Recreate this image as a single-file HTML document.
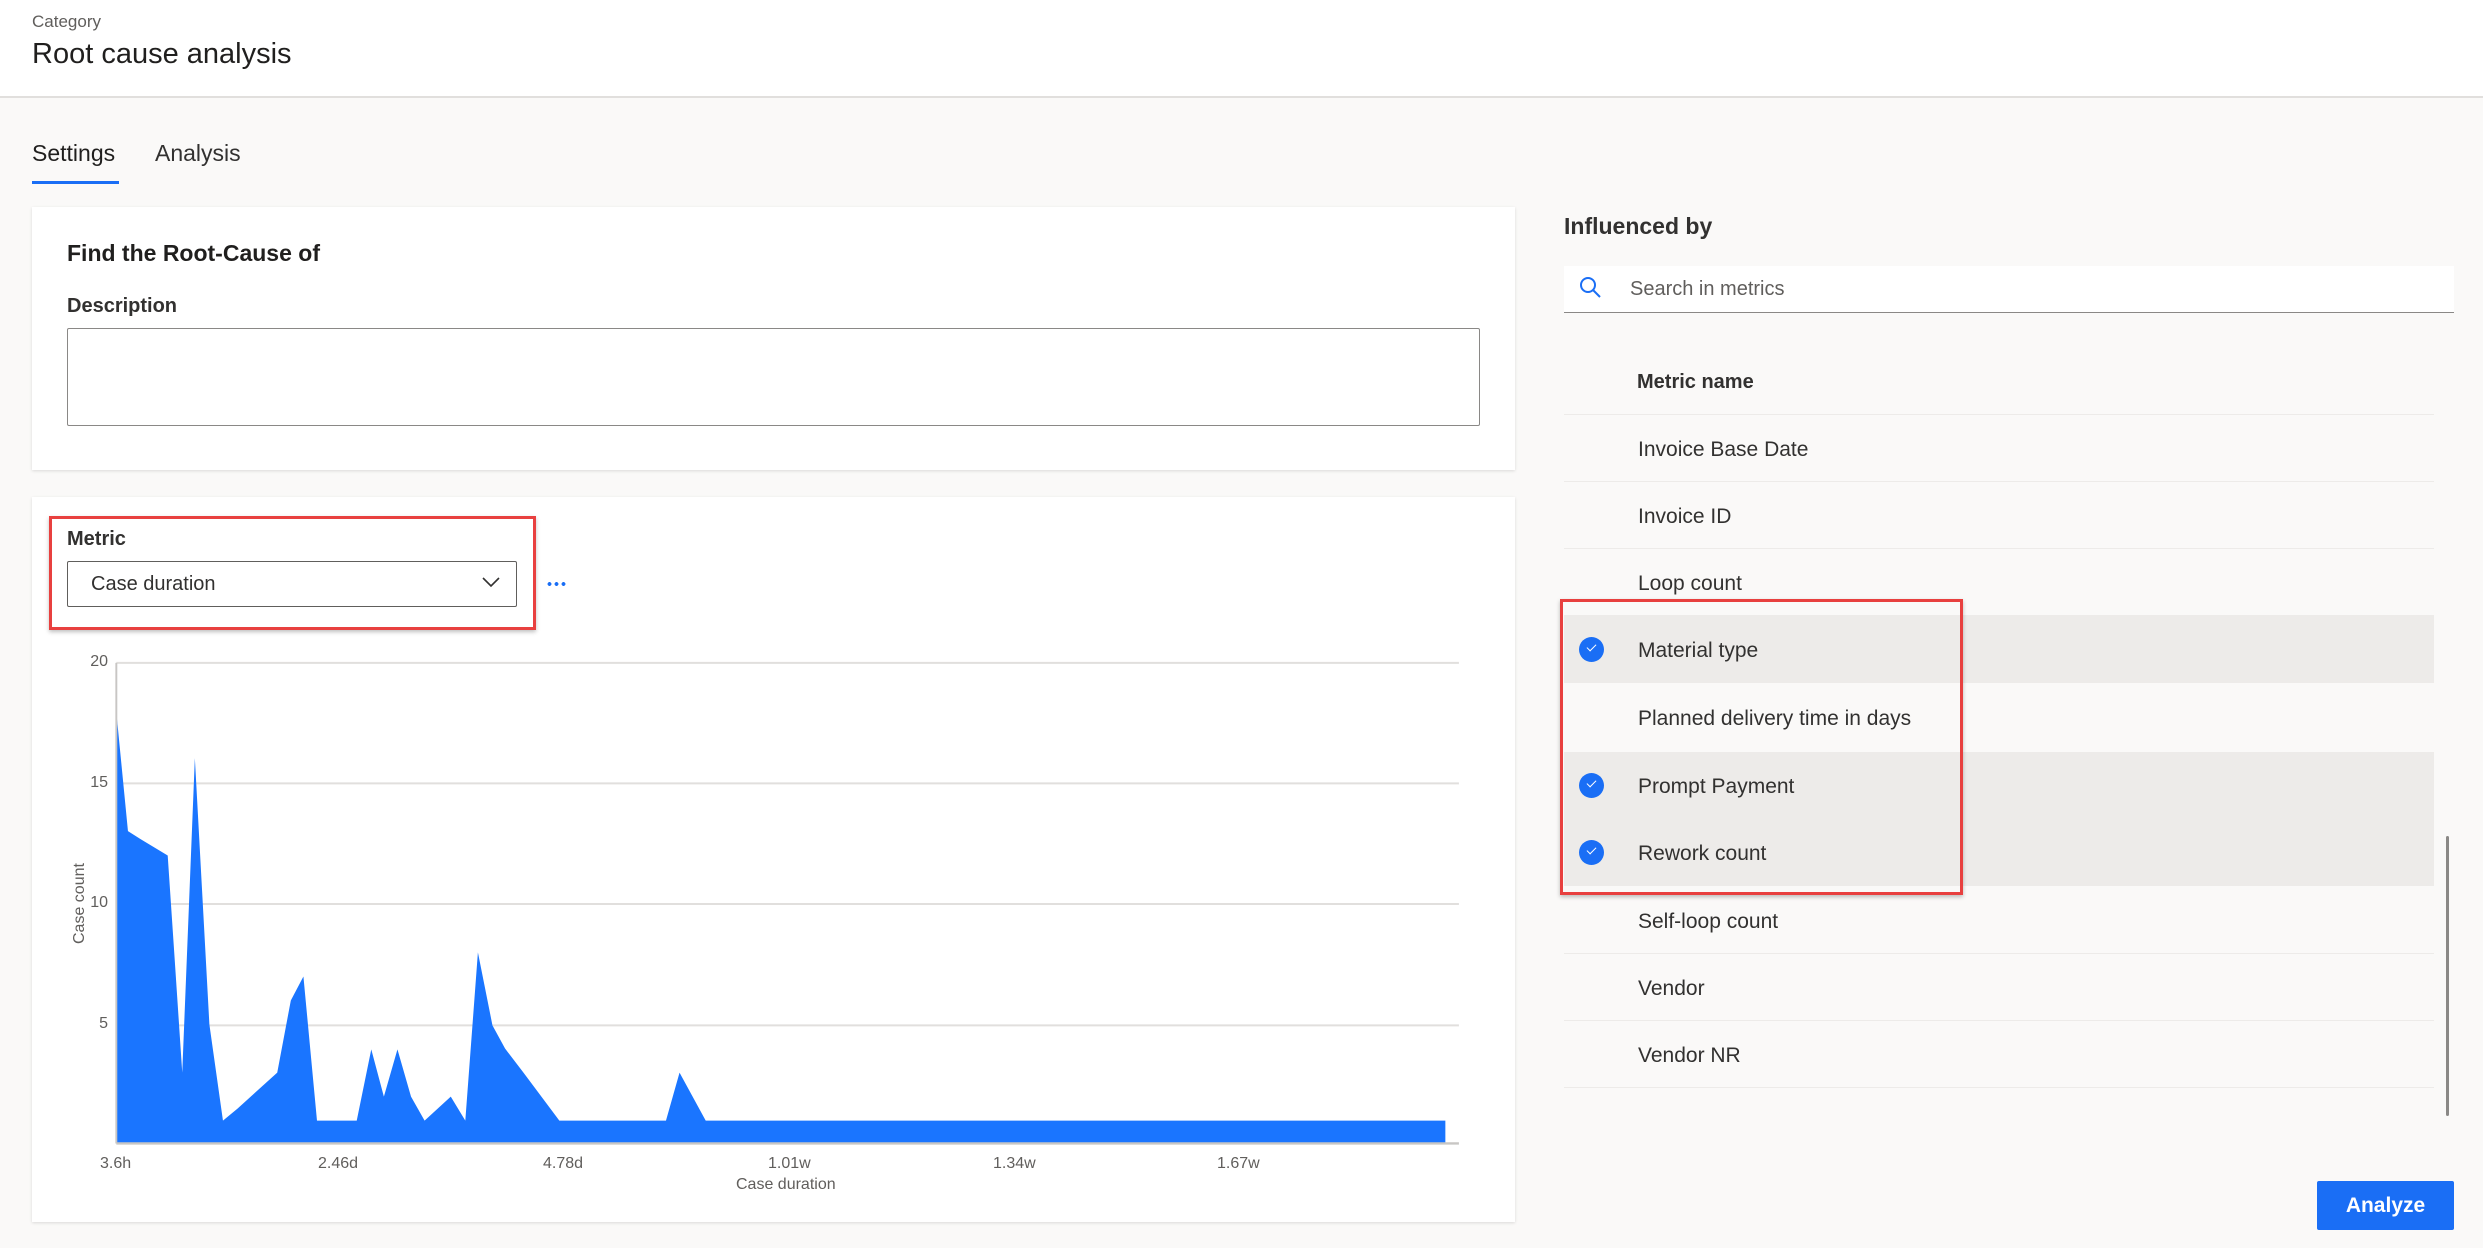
<!DOCTYPE html>
<html><head><meta charset="utf-8"><style>
*{box-sizing:border-box;margin:0;padding:0}
body{width:2483px;height:1248px;background:#faf9f8;font-family:"Liberation Sans",sans-serif;color:#323130;position:relative;overflow:hidden}
.a{position:absolute;white-space:nowrap}
.card{position:absolute;background:#fff;box-shadow:0 1px 3px rgba(0,0,0,.13)}
.row{position:absolute;left:1564px;width:870px;height:67px;border-bottom:1px solid #edebe9}
.row span{position:absolute;left:74px;top:23px;font-size:21px;color:#323130}
.sel{background:#edebe9}
.chk{position:absolute;left:15px;top:21px;width:25px;height:25px;border-radius:50%;background:#1a6ef5}
.chk::after{content:"";position:absolute;left:8px;top:7px;width:8px;height:4px;border-left:1.6px solid #fff;border-bottom:1.6px solid #fff;transform:rotate(-45deg)}
.yl{position:absolute;font-size:16px;color:#605e5c;text-align:right;width:30px;left:78px}
.xl{position:absolute;font-size:16px;color:#605e5c;top:1155px}
</style></head><body>
<div class="a" style="left:0;top:0;width:2483px;height:98px;background:#fff;border-bottom:2px solid #e1dfdd"></div>
<div class="a" style="left:32px;top:12px;font-size:17px;color:#605e5c">Category</div>
<div class="a" style="left:32px;top:38px;font-size:29px;color:#201f1e">Root cause analysis</div>
<div class="a" style="left:32px;top:140px;font-size:23px;color:#201f1e">Settings</div>
<div class="a" style="left:155px;top:140px;font-size:23px;color:#323130">Analysis</div>
<div class="a" style="left:32px;top:181px;width:87px;height:3px;background:#1a6ef5"></div>

<div class="card" style="left:32px;top:207px;width:1483px;height:263px"></div>
<div class="a" style="left:67px;top:240px;font-size:23px;font-weight:bold;color:#201f1e">Find the Root-Cause of</div>
<div class="a" style="left:67px;top:295px;font-size:20px;font-weight:bold;color:#323130">Description</div>
<div class="a" style="left:67px;top:328px;width:1413px;height:98px;border:1px solid #8a8886;border-radius:2px"></div>

<div class="card" style="left:32px;top:497px;width:1483px;height:725px"></div>
<div class="a" style="left:49px;top:516px;width:487px;height:114px;border:3px solid #e8403f;box-shadow:0 2px 4px rgba(0,0,0,.25)"></div>
<div class="a" style="left:67px;top:528px;font-size:20px;font-weight:bold;color:#323130">Metric</div>
<div class="a" style="left:67px;top:561px;width:450px;height:46px;border:1px solid #605e5c;border-radius:2px"></div>
<div class="a" style="left:91px;top:573px;font-size:20px;color:#323130">Case duration</div>
<svg class="a" style="left:481px;top:575px" width="20" height="14"><path d="M2 3 L10 11 L18 3" fill="none" stroke="#323130" stroke-width="1.6"/></svg>
<div class="a" style="left:546px;top:582px;width:22px;height:4px;background:radial-gradient(circle,#1a6ef5 1.8px,transparent 2px) 0 0/7px 4px repeat-x"></div>

<svg class="a" style="left:0;top:620px" width="1520" height="628" viewBox="0 0 1568 1568" preserveAspectRatio="none">
<g stroke="#e1dfdd" stroke-width="5"><line x1="120" y1="107" x2="1505" y2="107"/><line x1="120" y1="408" x2="1505" y2="408"/><line x1="120" y1="709" x2="1505" y2="709"/><line x1="120" y1="1012" x2="1505" y2="1012"/></g>
<polygon fill="#1a75ff" points="120,1307 120,230 132,527 145,547 173,588 180,840 188,1130 201,345 216,1010 230,1250 245,1220 286,1130 300,950 313,890 327,1250 368,1250 383,1072 396,1190 410,1072 424,1190 438,1250 465,1190 480,1250 493,830 508,1012 521,1070 540,1130 577,1250 687,1250 701,1130 728,1250 1491,1250 1491,1307"/>
<line x1="120" y1="1307" x2="1505" y2="1307" stroke="#c8c6c4" stroke-width="6"/>
<line x1="120" y1="107" x2="120" y2="1307" stroke="#c8c6c4" stroke-width="2"/>
</svg>
<div class="yl" style="top:653px">20</div>
<div class="yl" style="top:774px">15</div>
<div class="yl" style="top:894px">10</div>
<div class="yl" style="top:1015px">5</div>
<div class="a" style="left:40px;top:895px;font-size:16px;color:#605e5c;transform:rotate(-90deg);transform-origin:center;width:80px;text-align:center">Case count</div>
<div class="xl" style="left:100px">3.6h</div>
<div class="xl" style="left:318px">2.46d</div>
<div class="xl" style="left:543px">4.78d</div>
<div class="xl" style="left:768px">1.01w</div>
<div class="xl" style="left:993px">1.34w</div>
<div class="xl" style="left:1217px">1.67w</div>
<div class="a" style="left:736px;top:1176px;font-size:16px;color:#605e5c">Case duration</div>

<div class="a" style="left:1564px;top:213px;font-size:23px;font-weight:bold;color:#323130">Influenced by</div>
<div class="a" style="left:1564px;top:266px;width:890px;height:47px;background:#fff;border-bottom:1px solid #8a8886"></div>
<svg class="a" style="left:1579px;top:276px" width="24" height="24"><circle cx="9" cy="9" r="7" fill="none" stroke="#1a6ef5" stroke-width="2"/><line x1="14" y1="14" x2="21" y2="21" stroke="#1a6ef5" stroke-width="2"/></svg>
<div class="a" style="left:1630px;top:278px;font-size:20px;color:#605e5c">Search in metrics</div>
<div class="a" style="left:1637px;top:371px;font-size:20px;font-weight:bold;color:#323130">Metric name</div>
<div class="row" style="top:348px;height:67px"></div>
<div class="row" style="top:415px"><span>Invoice Base Date</span></div>
<div class="row" style="top:482px"><span>Invoice ID</span></div>
<div class="row" style="top:549px"><span>Loop count</span></div>
<div class="row sel" style="top:616px"><div class="chk"></div><span>Material type</span></div>
<div class="row" style="top:684px;border:none"><span>Planned delivery time in days</span></div>
<div class="row sel" style="top:752px;border:none"><div class="chk"></div><span>Prompt Payment</span></div>
<div class="row sel" style="top:819px"><div class="chk"></div><span>Rework count</span></div>
<div class="row" style="top:887px"><span>Self-loop count</span></div>
<div class="row" style="top:954px"><span>Vendor</span></div>
<div class="row" style="top:1021px"><span>Vendor NR</span></div>
<div class="a" style="left:1560px;top:599px;width:403px;height:296px;border:3px solid #e8403f;box-shadow:0 2px 4px rgba(0,0,0,.25)"></div>
<div class="a" style="left:2446px;top:836px;width:3px;height:280px;background:#8a8886;border-radius:2px"></div>
<div class="a" style="left:2317px;top:1181px;width:137px;height:49px;background:#1a6ef5;border-radius:2px;color:#fff;font-size:21px;font-weight:bold;text-align:center;line-height:49px">Analyze</div>
</body></html>
